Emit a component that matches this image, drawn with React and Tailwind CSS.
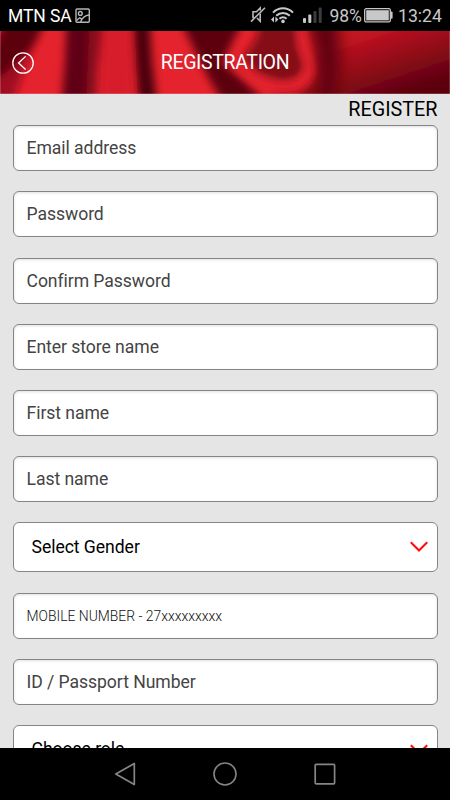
import clsx from 'clsx';

const FIELDS = [
  { id: 'email', label: 'Email address', type: 'input' },
  { id: 'password', label: 'Password', type: 'input' },
  { id: 'confirm', label: 'Confirm Password', type: 'input' },
  { id: 'store', label: 'Enter store name', type: 'input' },
  { id: 'first', label: 'First name', type: 'input' },
  { id: 'last', label: 'Last name', type: 'input' },
  { id: 'gender', label: 'Select Gender', type: 'select' },
  { id: 'mobile', label: 'MOBILE NUMBER - 27xxxxxxxxx', type: 'input', small: true },
  { id: 'passport', label: 'ID / Passport Number', type: 'input' },
  { id: 'role', label: 'Choose role', type: 'select' },
];

const StatusBar = () => (
  <div className="flex h-[31px] shrink-0 items-center bg-black pl-2 pr-2 text-[#c8c8c8]">
    <span className="text-[17.5px] leading-none tracking-[-0.1px] text-white pt-[2px]">MTN SA</span>
    <svg className="ml-[3px] mt-px h-[16px] w-[16px]" viewBox="0 0 16 16" fill="none" stroke="#b5b5b5" strokeWidth="1.4">
      <rect x="1" y="1" width="13.3" height="13.3" rx="1" />
      <circle cx="5.3" cy="5.4" r="1.9" />
      <path d="M1.5 12.5 L4.7 9.8 L7.3 11.3 M5.6 14 C7.2 9.8 9.6 7.4 14 7" />
    </svg>
    <div className="ml-auto flex items-center">
      {/* muted speaker */}
      <svg className="h-[18px] w-[16px]" viewBox="0 0 16 18" fill="none" stroke="#b8b8b8" strokeWidth="1.6">
        <path d="M10.2 4.5 V2 L6.5 5.7 H3 V11.5 H4.2 M7 12 L10.2 15.2 V7.5" />
        <path d="M15 1.8 L1 15.6" />
      </svg>
      <svg className="ml-[5px] h-[18px] w-[24px]" viewBox="0 0 24 18" fill="none" stroke="#c8c8c8" strokeWidth="2">
        <path d="M2 6.6 C7.8 0.8 16.2 0.8 22 6.6" />
        <path d="M5.2 9.8 C9.1 6 14.9 6 18.8 9.8" />
        <path d="M8.4 12.8 C10.5 10.8 13.5 10.8 15.6 12.8" />
        <circle cx="12" cy="15.4" r="1.8" fill="#c8c8c8" stroke="none" />
        <path d="M0 13.5 L3 10.5 V16.5 Z M7.4 13.5 L4.4 10.5 V16.5 Z" fill="#c8c8c8" stroke="none" />
      </svg>
      <svg className="ml-[8px] h-[16px] w-[19px]" viewBox="0 0 19 16">
        <rect x="0" y="11" width="3" height="5" rx="1" fill="#c8c8c8" />
        <rect x="5.3" y="7.5" width="3" height="8.5" rx="1" fill="#c8c8c8" />
        <rect x="10.5" y="4" width="3" height="12" rx="1" fill="#3c3c3c" />
        <rect x="15.7" y="0.5" width="3" height="15.5" rx="1" fill="#3c3c3c" />
      </svg>
      <span className="ml-[7px] pt-[2px] text-[17.5px] leading-none">98%</span>
      <svg className="ml-[2px] mt-px h-[15px] w-[29px]" viewBox="0 0 29 15">
        <rect x="0.7" y="0.7" width="25.6" height="13.2" rx="1.5" fill="none" stroke="#c8c8c8" strokeWidth="1.3" />
        <rect x="2.2" y="2.2" width="22.6" height="10.2" fill="#c8c8c8" />
        <rect x="26.8" y="3.6" width="1.8" height="7.2" rx="0.8" fill="#c8c8c8" />
      </svg>
      <span className="ml-[5px] pt-[2px] text-[17.7px] leading-none">13:24</span>
    </div>
  </div>
);

// Folded red satin behind the title
const Satin = () => (
  <svg className="absolute inset-0 h-full w-full" viewBox="0 0 450 63" preserveAspectRatio="none">
    <defs>
      <linearGradient id="sheet" gradientUnits="userSpaceOnUse" x1="370" y1="0" x2="392" y2="66">
        <stop offset="0" stopColor="#c41422" />
        <stop offset="0.5" stopColor="#920918" />
        <stop offset="1" stopColor="#5c0410" />
      </linearGradient>
      <filter id="soft" filterUnits="userSpaceOnUse" x="-40" y="-40" width="530" height="143">
        <feGaussianBlur stdDeviation="4.5" />
      </filter>
      <filter id="softer" filterUnits="userSpaceOnUse" x="-40" y="-40" width="530" height="143">
        <feGaussianBlur stdDeviation="8" />
      </filter>
    </defs>
    <rect width="450" height="63" fill="#e5232e" />
    <g filter="url(#soft)">
      <path d="M-20 -20 H50 L28 28 L10 80 H-20 Z" fill="#a01020" />
      <path d="M14 -20 H50 L34 14 L8 40 L-20 60 V40 Z" fill="#5c0410" />
      <path d="M67 -20 H101 L97 30 L92 80 H61 L65 30 Z" fill="#5e0412" />
      <path d="M90 -20 H105 L98 40 L96 80 H86 Z" fill="#8c0c1a" />
      <path d="M105 -20 H130 L134 80 H100 Z" fill="#d71d29" />
      <path d="M132 -20 H149 L152 30 L158 80 H139 L135 30 Z" fill="#4c000c" />
      <path d="M176 -20 H248 L228 20 L222 32 L240 46 L275 80 H228 L208 46 L194 18 Z" fill="#5c0410" />
      <path d="M262 -20 H300 L298 15 L306 34 L299 48 L282 52 L258 44 L242 28 L256 8 Z" fill="#840d19" />
      <path d="M303 -20 H480 V100 H270 V64 L300 60 L314 46 L311 24 Z" fill="url(#sheet)" />
    </g>
    <path d="M306 -30 H336 L340 30 L332 90 H316 L320 44 Z" fill="#5c0410" filter="url(#softer)" />
    <path d="M300 -12 C300 12 310 26 309 38 C307 54 286 61 264 52 C250 46 244 42 238 34" fill="none" stroke="#e0222e" strokeWidth="8" filter="url(#soft)" />
    <path d="M0.5 0 V63 M449.5 0 V63 M0 62.5 H450" stroke="#ffffff" strokeOpacity="0.18" />
  </svg>
);

const Header = () => (
  <header className="relative flex h-[63px] shrink-0 items-center overflow-hidden bg-[#b01320] text-white">
    <Satin />
    <svg className="relative ml-3 mt-px h-[22px] w-[22px]" viewBox="0 0 22 22" fill="none" stroke="white" strokeWidth="1.3">
      <circle cx="11" cy="11" r="10.2" />
      <path d="M13.6 4.4 L6.6 11 L13.6 17.4" />
    </svg>
    <h1 className="relative -ml-[34px] w-full text-center text-[19.5px] leading-none tracking-[-0.35px]">REGISTRATION</h1>
  </header>
);

const Chevron = () => (
  <svg className="h-[12px] w-[18px]" viewBox="0 0 18 12" fill="none" stroke="#ff0d0d" strokeWidth="2.1">
    <path d="M0.8 1.2 L9 9.4 L17.2 1.2" />
  </svg>
);

const Field = ({ field }) => {
  if (field.type === 'select') {
    return (
      <button className="flex h-[50px] w-full shrink-0 items-center justify-between rounded-[6px] border border-[#858585] bg-white pl-[18px] pr-[9px] text-[17.6px] tracking-[-0.05px] text-black">
        <span className="-mt-px">{field.label}</span>
        <Chevron />
      </button>
    );
  }
  return (
    <input
      type="text"
      placeholder={field.label}
      className={clsx(
        'h-[46px] w-full shrink-0 rounded-[6px] border border-[#858585] bg-white px-[13px] shadow-[inset_0_1px_3px_rgba(0,0,0,0.12)] outline-none',
        field.small
          ? 'text-[13.9px] placeholder:font-light placeholder:text-[#111111]'
          : 'text-[17.6px] tracking-[-0.06px] placeholder:text-[#444444]'
      )}
    />
  );
};

const NavBar = () => (
  <nav className="flex h-[52px] shrink-0 items-center justify-center gap-[76px] bg-black">
    <svg className="h-[24px] w-[24px]" viewBox="0 0 24 24" fill="none" stroke="#858585" strokeWidth="1.7" strokeLinejoin="round">
      <path d="M21.3 1.5 V22.5 L2.8 12 Z" />
    </svg>
    <svg className="h-[24px] w-[24px]" viewBox="0 0 24 24" fill="none" stroke="#858585" strokeWidth="1.6">
      <circle cx="12" cy="12" r="11" />
    </svg>
    <svg className="h-[24px] w-[24px]" viewBox="0 0 24 24" fill="none" stroke="#858585" strokeWidth="1.7">
      <rect x="2.2" y="2.4" width="19.4" height="19.4" rx="1" />
    </svg>
  </nav>
);

export default function App() {
  return (
    <div className="flex h-[800px] w-[450px] flex-col overflow-hidden bg-[#e5e5e5] font-[Roboto,sans-serif]">
      <StatusBar />
      <Header />
      <main className="min-h-0 flex-1 overflow-hidden px-[12.5px]">
        <h2 className="h-[31.2px] text-right text-[19.8px] leading-[31px] text-black">REGISTER</h2>
        <form className="flex flex-col gap-[20.2px]">
          {FIELDS.map((field) => (
            <Field key={field.id} field={field} />
          ))}
        </form>
      </main>
      <NavBar />
    </div>
  );
}
